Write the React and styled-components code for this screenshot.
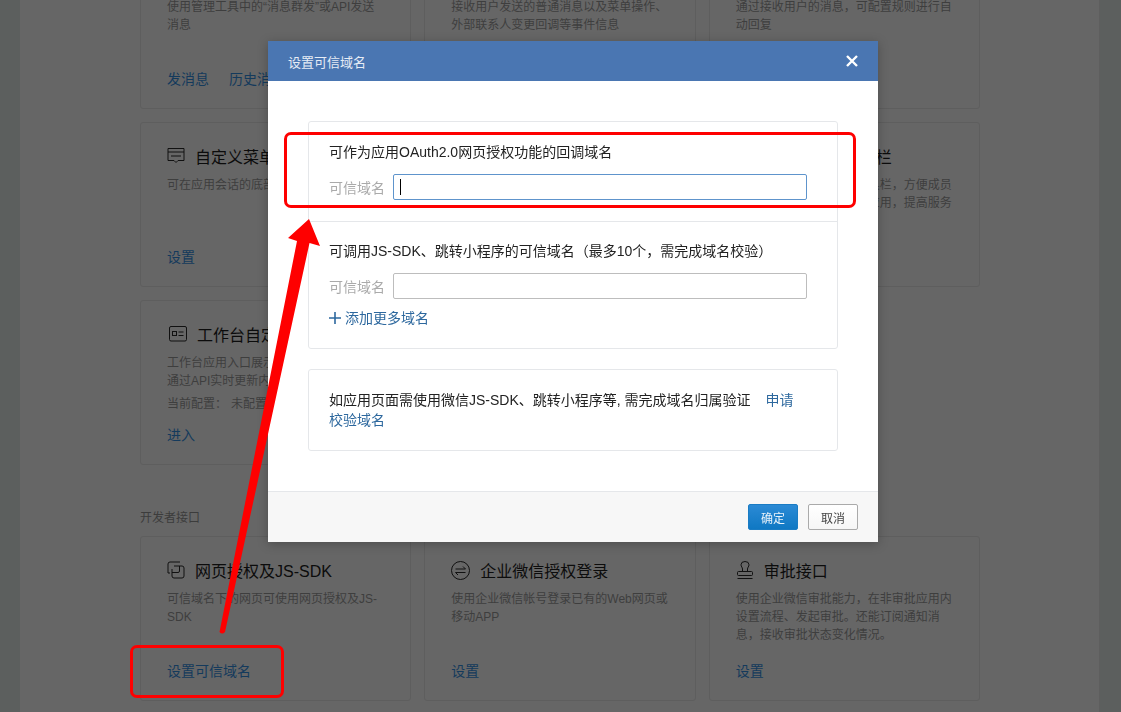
import React from "react";
import styled, { createGlobalStyle } from "styled-components";

const FONT = `"Liberation Sans", "Noto Sans CJK SC", sans-serif`;

const GlobalStyle = createGlobalStyle`
  html, body {
    margin: 0;
    height: 100%;
    overflow: hidden;
    font-family: ${FONT};
  }
  * { box-sizing: border-box; }
`;

/* page colours are the ones seen through the dialog's dark mask */
const Page = styled.div`
  height: 712px;
  overflow: hidden;
  padding: 0 21px 0 20px;
  background: #5c5f5e;
`;

const Panel = styled.div`
  display: flow-root;
  height: 100%;
  padding: 0 119px 0 120px;
  background: #666;
  border-right: 1px solid #5e5e5e;
`;

/* the page is scrolled down a little in the picture */
const Grid = styled.div`
  display: grid;
  grid-template-columns: repeat(3, 1fr);
  gap: 13px;
  margin-top: ${(p) => p.$top || 0}px;
`;

const GroupLabel = styled.div`
  margin-top: 44px;
  margin-bottom: 9px;
  font-size: 12px;
  line-height: 18px;
  color: #3c3c3c;
`;

const Card = styled.div`
  height: 165px;
  padding: 21px 20px 19px 26px;
  display: flex;
  flex-direction: column;
  border: 1px solid #5e5e5e;
  border-radius: 3px;
`;

const CardTitle = styled.div`
  display: flex;
  align-items: center;
  gap: 10px;
  height: 24px;
  font-size: 16px;
  color: #0c0c0c;
  white-space: nowrap;
  svg {
    flex: none;
  }
`;

const CardDesc = styled.div`
  margin-top: 8px;
  font-size: 12px;
  line-height: 18px;
  color: #3e3e3e;
  white-space: pre-line;
`;

const CardNote = styled.div`
  margin-top: 5px;
  font-size: 12px;
  line-height: 18px;
  color: #3e3e3e;
  span {
    margin-left: 4px;
  }
`;

const CardLinks = styled.div`
  margin-top: auto;
  display: flex;
  gap: 20px;
`;

const CardLink = styled.a`
  font-size: 14px;
  line-height: 20px;
  color: #143a5c;
`;

const Modal = styled.div`
  position: fixed;
  top: 41px;
  left: 268px;
  width: 610px;
  height: 501px;
  display: flex;
  flex-direction: column;
  background: #fff;
  box-shadow: 0 2px 10px rgba(0, 0, 0, 0.25);
`;

const ModalHeader = styled.div`
  flex: none;
  height: 40px;
  padding: 0 20px;
  display: flex;
  align-items: center;
  justify-content: space-between;
  background: #4a76b2;
  color: #e6ecf5;
  font-size: 13px;
`;

const ModalBody = styled.div`
  flex: 1;
  padding: 40px 40px 0;
  display: flex;
  flex-direction: column;
  gap: 20px;
`;

const Box = styled.div`
  border: 1px solid #e5e7ea;
  border-radius: 3px;
`;

const Section = styled.div`
  padding: ${(p) => (p.$divided ? "19px" : "20px")} 30px
    ${(p) => (p.$tall ? "21px" : "20px")} 20px;
  border-top: ${(p) => (p.$divided ? "1px solid #e5e7ea" : "none")};
`;

const SectionText = styled.div`
  font-size: 14px;
  line-height: 20px;
  color: #222;
`;

const Field = styled.div`
  position: relative;
  margin-top: 12px;
  display: flex;
  align-items: center;
`;

const FieldLabel = styled.label`
  width: 64px;
  flex: none;
  font-size: 14px;
  color: #aaa;
`;

const Input = styled.div`
  flex: 1;
  height: 26px;
  background: #fff;
  border: 1px solid ${(p) => (p.$focus ? "#5e94cc" : "#bdbdbd")};
  border-radius: 2px;
`;

const Caret = styled.span`
  position: absolute;
  left: 71px;
  top: 5px;
  width: 1px;
  height: 16px;
  background: #000;
`;

const AddMore = styled.a`
  margin-top: 9px;
  display: flex;
  align-items: center;
  gap: 4px;
  font-size: 14px;
  line-height: 20px;
  color: #2d689e;
`;

const InlineLink = styled.a`
  margin-left: 15px;
  color: #2d689e;
`;

const ModalFooter = styled.div`
  flex: none;
  height: 51px;
  padding-right: 20px;
  display: flex;
  align-items: center;
  justify-content: flex-end;
  gap: 10px;
  background: #f7f7f7;
  border-top: 1px solid #e5e7ea;
`;

const Button = styled.button`
  width: 50px;
  height: 26px;
  padding: 0;
  font-family: ${FONT};
  font-size: 12px;
  border-radius: 2px;
  border: 1px solid ${(p) => (p.$primary ? "#1a7cc4" : "#aaa")};
  color: ${(p) => (p.$primary ? "#e8f2fa" : "#444")};
  background: ${(p) =>
    p.$primary
      ? "linear-gradient(#2b8ad5, #0f78c3)"
      : "linear-gradient(#fff, #f6f6f6)"};
`;

const Annotation = styled.div`
  position: fixed;
  top: ${(p) => p.$y}px;
  left: ${(p) => p.$x}px;
  width: ${(p) => p.$w}px;
  height: ${(p) => p.$h}px;
  border: 3px solid #fe0000;
  border-radius: 7px;
`;

const ArrowLayer = styled.svg`
  position: fixed;
  top: 0;
  left: 0;
  pointer-events: none;
`;

const MenuIcon = () => (
  <svg width="18" height="18" viewBox="0 0 18 18" fill="none" stroke="#111" strokeWidth="1">
    <path d="M1 1.500h16v12h-6l-2 2-2-2H1z" />
    <path d="M1 5h16M4 9h10" />
  </svg>
);

const DeskIcon = () => (
  <svg width="20" height="18" viewBox="0 0 20 18" fill="none" stroke="#111" strokeWidth="1">
    <rect x="2.500" y="1.500" width="17" height="14.500" rx="1.500" />
    <rect x="5.500" y="6.500" width="4" height="4" />
    <path d="M11.500 7h5M11.500 10.500h5" />
  </svg>
);

const WebIcon = () => (
  <svg width="18" height="18" viewBox="0 0 18 18" fill="none" stroke="#111" strokeWidth="1">
    <path d="M13 1H3a2 2 0 0 0-2 2v9h2" />
    <path d="M7 5h8a2 2 0 0 1 2 2v8a2 2 0 0 1-2 2H7a2 2 0 0 1-2-2V8" />
    <path d="M5 11.500h6a1.500 1.500 0 0 0 1.500-1.500V5" />
  </svg>
);

const SwapIcon = () => (
  <svg width="19" height="19" viewBox="0 0 19 19" fill="none" stroke="#111" strokeWidth="1">
    <circle cx="9.500" cy="9.500" r="9" />
    <path d="M4.500 8h10l-2.500-2.500M14.500 11.500h-10l2.500 2.500" />
  </svg>
);

const StampIcon = () => (
  <svg width="18" height="19" viewBox="0 0 18 19" fill="none" stroke="#111" strokeWidth="1">
    <path d="M6.500 10.500V8C6.500 6.500 5 5.500 5 3.800a4 3.300 0 0 1 8 0c0 1.700-1.500 2.700-1.500 4.200v2.500" />
    <rect x="1.500" y="10.500" width="15" height="4" rx="1" />
    <path d="M1.500 17.500h15" />
  </svg>
);

const CloseIcon = () => (
  <svg width="12" height="12" viewBox="0 0 12 12" stroke="#fff" strokeWidth="2.400">
    <path d="M1 1l10 10M11 1L1 11" />
  </svg>
);

const PlusIcon = () => (
  <svg width="12" height="12" viewBox="0 0 12 12" stroke="#2d689e" strokeWidth="1.600">
    <path d="M6 0v12M0 6h12" />
  </svg>
);

const topCards = [
  { desc: "使用管理工具中的“消息群发”或API发送\n消息", links: ["发消息", "历史消息"] },
  { desc: "接收用户发送的普通消息以及菜单操作、外部联系人变更回调等事件信息", links: ["设置"] },
  { desc: "通过接收用户的消息，可配置规则进行自动回复", links: ["设置"] },
  {
    icon: <MenuIcon />,
    title: "自定义菜单",
    desc: "可在应用会话的底部添加自定义菜单",
    links: ["设置"],
  },
  {
    title: "素材库",
    desc: "管理应用使用的图片、文件等素材",
    links: ["设置"],
  },
  {
    icon: <MenuIcon />,
    title: "添加到聊天工具栏",
    desc: "可将该应用添加到聊天工具栏，方便成员在聊天中快捷打开并使用应用，提高服务",
    links: ["设置"],
  },
  {
    icon: <DeskIcon />,
    title: "工作台自定义展示",
    desc: "工作台应用入口展示的自定义内容，可以\n通过API实时更新内容",
    note: "未配置",
    links: ["进入"],
  },
];

const apiCards = [
  {
    icon: <WebIcon />,
    title: "网页授权及JS-SDK",
    desc: "可信域名下的网页可使用网页授权及JS-SDK",
    links: ["设置可信域名"],
  },
  {
    icon: <SwapIcon />,
    title: "企业微信授权登录",
    desc: "使用企业微信帐号登录已有的Web网页或移动APP",
    links: ["设置"],
  },
  {
    icon: <StampIcon />,
    title: "审批接口",
    desc: "使用企业微信审批能力，在非审批应用内设置流程、发起审批。还能订阅通知消息，接收审批状态变化情况。",
    links: ["设置"],
  },
];

const FeatureCard = ({ icon, title, desc, note, links }) => (
  <Card>
    <CardTitle>
      {icon}
      {title}
    </CardTitle>
    <CardDesc>{desc}</CardDesc>
    {note && (
      <CardNote>
        当前配置：<span>{note}</span>
      </CardNote>
    )}
    <CardLinks>
      {links.map((link) => (
        <CardLink key={link}>{link}</CardLink>
      ))}
    </CardLinks>
  </Card>
);

const App = () => {
  return (
    <>
      <GlobalStyle />
      <Page>
        <Panel>
          <Grid $top={-56}>
            {topCards.map((card, index) => (
              <FeatureCard key={index} {...card} />
            ))}
          </Grid>
          <GroupLabel>开发者接口</GroupLabel>
          <Grid>
            {apiCards.map((card, index) => (
              <FeatureCard key={index} {...card} />
            ))}
          </Grid>
        </Panel>
      </Page>

      <Modal>
        <ModalHeader>
          设置可信域名
          <CloseIcon />
        </ModalHeader>
        <ModalBody>
          <Box>
            <Section $tall>
              <SectionText>可作为应用OAuth2.0网页授权功能的回调域名</SectionText>
              <Field>
                <FieldLabel>可信域名</FieldLabel>
                <Input $focus />
                <Caret />
              </Field>
            </Section>
            <Section $divided>
              <SectionText>可调用JS-SDK、跳转小程序的可信域名（最多10个，需完成域名校验）</SectionText>
              <Field>
                <FieldLabel>可信域名</FieldLabel>
                <Input />
              </Field>
              <AddMore>
                <PlusIcon />
                添加更多域名
              </AddMore>
            </Section>
          </Box>
          <Box>
            <Section>
              <SectionText>
                如应用页面需使用微信JS-SDK、跳转小程序等, 需完成域名归属验证
                <InlineLink>申请校验域名</InlineLink>
              </SectionText>
            </Section>
          </Box>
        </ModalBody>
        <ModalFooter>
          <Button $primary>确定</Button>
          <Button>取消</Button>
        </ModalFooter>
      </Modal>

      <Annotation $x={284} $y={132} $w={572} $h={76} />
      <Annotation $x={130} $y={645} $w={154} $h={53} />
      <ArrowLayer width="1121" height="712" viewBox="0 0 1121 712">
        <path
          d="M309 219L320 246L309.500 243L225 632Q222 635 219.500 632L297 241L288 238Z"
          fill="#fe0000"
        />
      </ArrowLayer>
    </>
  );
};

export default App;
